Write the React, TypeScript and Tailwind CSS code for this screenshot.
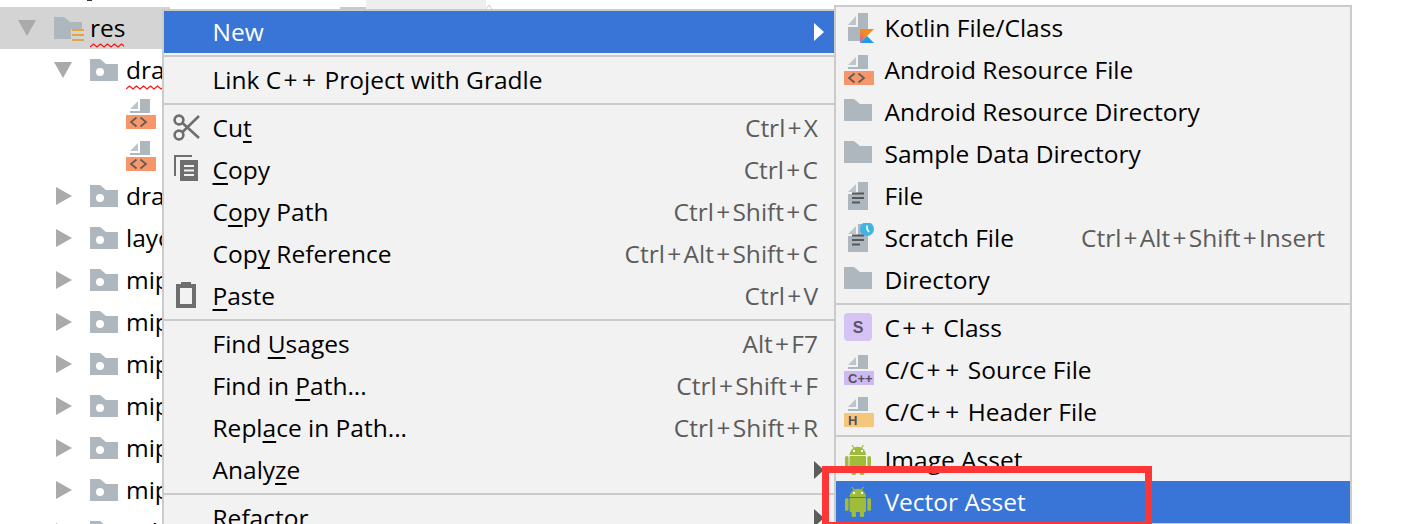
import React from "react";

const GRAY = "#adb7bd";

const Svg = ({ children }: { children: React.ReactNode }) => (
  <svg width="30" height="30" viewBox="0 0 30 30" className="block shrink-0">{children}</svg>
);

const Folder = ({ y = 4, dot = false }: { y?: number; dot?: boolean }) => (
  <Svg>
    <path d={`M0 ${y} H10 L16 ${y + 5} H28 V${y + 22} H0 Z`} fill={GRAY} />
    {dot && <circle cx="10" cy={y + 13} r="4" fill="#fff" />}
  </Svg>
);

const ResFolder = () => (
  <svg width="32" height="30" viewBox="0 0 32 30" className="block shrink-0">
    <path d="M0 4 H10 L16 9 H28 V26 H0 Z" fill={GRAY} />
    <path d="M17 16 H31 V31 H17 Z" fill="#d4d4d4" />
    <path d="M18 17 H30 M18 22 H30 M18 27 H30" stroke="#e2a53f" strokeWidth="2" />
  </svg>
);

const Sheet = () => (
  <>
    <path d="M4 10 L12 10 L12 2 Z" fill="#bcc5ca" />
    <path d="M14 0 H24 V14 H4 V12 H14 Z" fill={GRAY} />
  </>
);

const TagFile = ({ color = "#f7966a", label }: { color?: string; label?: string }) => (
  <Svg>
    <Sheet />
    <rect x="0" y="16" width="30" height="14" fill={color} />
    {label ? (
      <text x="4" y="28" fontSize="13" fontWeight="700" fontFamily="'Liberation Sans', sans-serif" fill="#55505a">
        {label}
      </text>
    ) : (
      <path d="M10.5 18.5 L5 23 L10.5 27.5 M14.5 18.5 L20 23 L14.5 27.5" fill="none" stroke="#5f5a55" strokeWidth="1.7" />
    )}
  </Svg>
);

const KotlinFile = () => (
  <Svg>
    <path d="M4 12 L12 12 L12 3 Z" fill="#bcc5ca" />
    <path d="M14 0 H24 V16 H16 V28 H4 V14 H14 Z" fill={GRAY} />
    <defs>
      <linearGradient id="kt" x1="1" y1="0" x2="0" y2="1">
        <stop offset="0.5" stopColor="#f58a1f" />
        <stop offset="1" stopColor="#c757bc" />
      </linearGradient>
    </defs>
    <path d="M16 16 H30 L16 30 Z" fill="url(#kt)" />
    <path d="M16 30 L23 23 L30 30 Z" fill="#1f9be8" />
  </Svg>
);

const TextFile = ({ clock = false }: { clock?: boolean }) => (
  <Svg>
    <path d="M4 11 L12 11 L12 3 Z" fill="#bcc5ca" />
    <path d="M14 1 H24 V29 H4 V13 H14 Z" fill={GRAY} />
    <path d="M8 12.5 H20 M8 17 H20 M8 21.5 H16" stroke="#55595c" strokeWidth="1.8" />
    {clock && (
      <>
        <circle cx="23" cy="6" r="7" fill="#3fb4e5" />
        <path d="M23 2.5 V6 L25 9" fill="none" stroke="#fff" strokeWidth="1.6" />
      </>
    )}
  </Svg>
);

const CppClass = () => (
  <Svg>
    <rect x="0" y="0" width="28" height="28" rx="4" fill="#d6c3f5" />
    <text x="14" y="20" textAnchor="middle" fontSize="16" fontWeight="700" fontFamily="'Liberation Sans', sans-serif" fill="#5b5566">
      S
    </text>
  </Svg>
);

const Android = () => (
  <Svg>
    <g fill="#9fbc3a">
      <path d="M5.5 10 A8.25 8.25 0 0 1 22 10 Z" />
      <rect x="5.5" y="11" width="16.5" height="14" rx="1" />
      <rect x="1" y="11" width="3.6" height="13" rx="1.8" />
      <rect x="23.4" y="11" width="3.6" height="13" rx="1.8" />
      <rect x="7.6" y="24" width="4.4" height="6" rx="1.5" />
      <rect x="15.8" y="24" width="4.4" height="6" rx="1.5" />
      <path d="M8 0 L10 3 M19.5 0 L17.5 3" stroke="#9fbc3a" strokeWidth="1.2" />
    </g>
    <rect x="9" y="5" width="2" height="2" fill="#fff" />
    <rect x="17" y="5" width="2" height="2" fill="#fff" />
  </Svg>
);

const Scissors = () => (
  <Svg>
    <g fill="none" stroke="#6e6e6e" strokeWidth="2.6">
      <circle cx="7" cy="7" r="4.4" />
      <circle cx="7" cy="22" r="4.4" />
      <path d="M10.5 10 L27 25 M10.5 19 L27 3" />
    </g>
  </Svg>
);

const Copy = () => (
  <Svg>
    <path d="M3 21 V1 H20" fill="none" stroke="#6e6e6e" strokeWidth="2" />
    <rect x="8" y="5" width="18" height="21" fill="#6e6e6e" />
    <path d="M12 11 H22 M12 15.5 H22 M12 20 H22" stroke="#f2f2f2" strokeWidth="1.8" />
  </Svg>
);

const Paste = () => (
  <Svg>
    <rect x="6" y="5" width="16" height="20" fill="none" stroke="#6e6e6e" strokeWidth="4" />
    <rect x="9" y="1" width="10" height="5" fill="#6e6e6e" />
  </Svg>
);

const Squiggle = ({ width }: { width: number }) => {
  let d = "M0 4";
  for (let x = 0; x < width; x += 7) d += ` L${x + 3.5} 1 L${x + 7} 4`;
  return (
    <svg width={width} height="5" viewBox={`0 0 ${width} 5`} className="absolute left-0 top-[36px]">
      <path d={d} fill="none" stroke="#ff1414" strokeWidth="1.3" />
    </svg>
  );
};

const Down = () => (
  <svg width="18" height="16" viewBox="0 0 18 16" className="block"><path d="M0 0 H18 L9 16 Z" fill="#aaaaaa" /></svg>
);
const Right = () => (
  <svg width="16" height="18" viewBox="0 0 16 18" className="block ml-[2px]"><path d="M0 0 L16 9 L0 18 Z" fill="#aaaaaa" /></svg>
);

type TreeItem = { label: string; open?: boolean; squiggle?: boolean };
const folders: TreeItem[] = [
  { label: "drawable" },
  { label: "layout" },
  { label: "mipmap" },
  { label: "mipmap" },
  { label: "mipmap" },
  { label: "mipmap" },
  { label: "mipmap" },
  { label: "mipmap" },
  { label: "values" },
];

const TreeRow = ({ label, open, squiggle }: TreeItem) => (
  <div className="flex items-center h-[42px] pl-[54px]">
    <div className="w-[36px] shrink-0">{open ? <Down /> : <Right />}</div>
    <Folder dot />
    <span className="relative ml-[6px] h-[42px] shrink-0 leading-[42px]">
      {label}
      {squiggle && <Squiggle width={36} />}
    </span>
  </div>
);

const Tree = () => (
  <div className="w-[170px] pt-[7px] text-black">
    <div className="flex items-center h-[42px] pl-[18px] bg-[#d4d4d4]">
      <div className="w-[36px] shrink-0"><Down /></div>
      <div className="w-[36px] shrink-0"><ResFolder /></div>
      <span className="relative h-[42px] shrink-0 leading-[42px]">
        res
        <Squiggle width={34} />
      </span>
    </div>
    <TreeRow label="drawable" open squiggle />
    <div className="h-[42px] pl-[126px] pt-[4px] flex items-center"><TagFile /></div>
    <div className="h-[42px] pl-[126px] pt-[4px] flex items-center"><TagFile /></div>
    {folders.map((f, i) => (
      <TreeRow key={i} {...f} />
    ))}
  </div>
);

const Sep = () => (
  <div className="py-[2px]"><div className="h-[2px] bg-[#cbcbcb]" /></div>
);

const Arrow = ({ color }: { color: string }) => (
  <svg width="10" height="20" viewBox="0 0 10 20" className="block ml-auto mr-[10px]"><path d="M0 1 L10 10 L0 19 Z" fill={color} /></svg>
);

// The reference's "+" glyph is wider than this font's, so each one gets a little room.
const Plus = ({ text }: { text: string }) => (
  <>
    {text.split(/(\+)/).map((part, i) =>
      part === "+" ? <span key={i} className="px-[2.25px]">+</span> : part
    )}
  </>
);

type RowProps = {
  icon?: React.ReactNode;
  shortcut?: string;
  arrow?: boolean;
  active?: boolean;
  end?: string;
  children: React.ReactNode;
};

const Row = ({ icon, shortcut, arrow, active, end = "mr-[16px]", children }: RowProps) => (
  <div className={`flex items-center h-[42px] shrink-0 ${active ? "bg-[#3875d7] text-white" : "text-black"}`}>
    <div className="w-[48.5px] pl-[8px] shrink-0">{icon}</div>
    <span className="whitespace-nowrap">{children}</span>
    {shortcut && <span className={`ml-auto text-[#5c5c5c] ${end}`}><Plus text={shortcut} /></span>}
    {arrow && <Arrow color={active ? "#ffffff" : "#5c5c5c"} />}
  </div>
);

const U = ({ children }: { children: React.ReactNode }) => (
  <u className="underline decoration-[2px] underline-offset-[4px] [text-decoration-skip-ink:none]">{children}</u>
);

export default function App() {
  return (
    <div className="relative h-[524px] overflow-hidden bg-white text-[24.5px] font-['Open_Sans','Noto_Sans',sans-serif]">
      <Tree />

      <div className="absolute left-[87px] top-0 h-[1px] w-[5px] bg-[#333333]" />

      <div className="absolute left-[340px] top-0 flex h-[9px] w-[152px] items-end">
        <div className="h-[2px] w-[27px] bg-[#c9c9c9]" />
        <div className="h-[9px] w-[122px] bg-[#eeeeee]" />
        <svg width="6" height="4" viewBox="0 0 6 4" className="block"><path d="M0 4 L3 0 L6 4" fill="#fff" stroke="#c9c9c9" /></svg>
      </div>

      <div className="absolute left-[162px] top-[9px] w-[674px] border-2 border-[#cbcbcb] bg-[#f2f2f2]">
        <Row active arrow>New</Row>
        <Sep />
        <Row><Plus text="Link C++ Project with Gradle" /></Row>
        <Sep />
        <Row icon={<Scissors />} shortcut="Ctrl+X">Cu<U>t</U></Row>
        <Row icon={<Copy />} shortcut="Ctrl+C"><U>C</U>opy</Row>
        <Row shortcut="Ctrl+Shift+C">C<U>o</U>py Path</Row>
        <Row shortcut="Ctrl+Alt+Shift+C">Cop<U>y</U> Reference</Row>
        <Row icon={<Paste />} shortcut="Ctrl+V"><U>P</U>aste</Row>
        <Sep />
        <Row shortcut="Alt+F7">Find <U>U</U>sages</Row>
        <Row shortcut="Ctrl+Shift+F">Find in <U>P</U>ath...</Row>
        <Row shortcut="Ctrl+Shift+R">Repl<U>a</U>ce in Path...</Row>
        <Row arrow>Analy<U>z</U>e</Row>
        <Sep />
        <Row arrow>Refactor</Row>
      </div>

      <div className="absolute left-[834px] top-[5px] w-[518px] border-2 border-[#cbcbcb] bg-[#f2f2f2]">
        <Row icon={<KotlinFile />}>Kotlin File/Class</Row>
        <Row icon={<TagFile />}>Android Resource File</Row>
        <Row icon={<Folder y={2} />}>Android Resource Directory</Row>
        <Row icon={<Folder y={2} />}>Sample Data Directory</Row>
        <Row icon={<TextFile />}>File</Row>
        <Row icon={<TextFile clock />} shortcut="Ctrl+Alt+Shift+Insert" end="mr-[25px]">Scratch File</Row>
        <Row icon={<Folder y={2} />}>Directory</Row>
        <Sep />
        <Row icon={<CppClass />}><Plus text="C++ Class" /></Row>
        <Row icon={<TagFile color="#cdb9f3" label="C++" />}><Plus text="C/C++ Source File" /></Row>
        <Row icon={<TagFile color="#f6c67c" label="H" />}><Plus text="C/C++ Header File" /></Row>
        <Sep />
        <Row icon={<Android />}>Image Asset</Row>
        <Row icon={<Android />} active>Vector Asset</Row>
      </div>

      <div className="absolute left-[822px] top-[466px] h-[63px] w-[330px] border-[7px] border-[#ff3636]" />
    </div>
  );
}
